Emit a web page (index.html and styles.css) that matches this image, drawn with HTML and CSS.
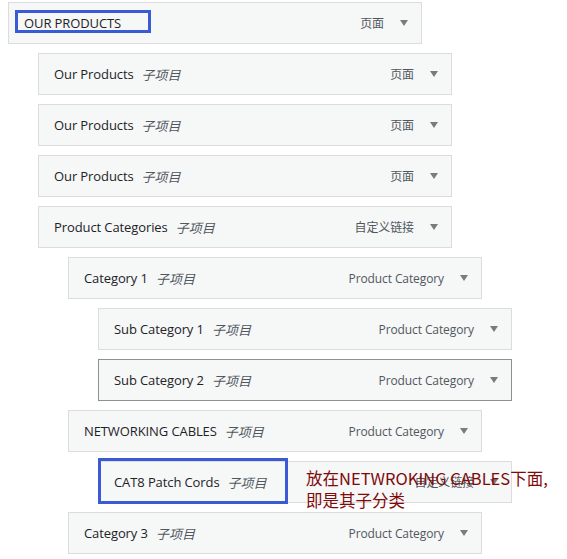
FILE: index.html
```html
<!DOCTYPE html>
<html lang="zh-CN">
<head>
    <meta charset="UTF-8">
    <title>菜单结构</title>
    <link rel="stylesheet" href="styles.css">
</head>
<body>
    <ul class="menu">
        <li class="menu-item depth-0">
            <span class="item-title">OUR PRODUCTS</span>
            <span class="item-type">页面</span>
            <span class="item-arrow"></span>
            <span class="mark mark-top"></span>
        </li>
        <li class="menu-item depth-1">
            <span class="item-title">Our Products</span>
            <span class="item-sub">子项目</span>
            <span class="item-type">页面</span>
            <span class="item-arrow"></span>
        </li>
        <li class="menu-item depth-1">
            <span class="item-title">Our Products</span>
            <span class="item-sub">子项目</span>
            <span class="item-type">页面</span>
            <span class="item-arrow"></span>
        </li>
        <li class="menu-item depth-1">
            <span class="item-title">Our Products</span>
            <span class="item-sub">子项目</span>
            <span class="item-type">页面</span>
            <span class="item-arrow"></span>
        </li>
        <li class="menu-item depth-1">
            <span class="item-title">Product Categories</span>
            <span class="item-sub">子项目</span>
            <span class="item-type">自定义链接</span>
            <span class="item-arrow"></span>
        </li>
        <li class="menu-item depth-2">
            <span class="item-title">Category 1</span>
            <span class="item-sub">子项目</span>
            <span class="item-type">Product Category</span>
            <span class="item-arrow"></span>
        </li>
        <li class="menu-item depth-3">
            <span class="item-title">Sub Category 1</span>
            <span class="item-sub">子项目</span>
            <span class="item-type">Product Category</span>
            <span class="item-arrow"></span>
        </li>
        <li class="menu-item depth-3 is-hover">
            <span class="item-title">Sub Category 2</span>
            <span class="item-sub">子项目</span>
            <span class="item-type">Product Category</span>
            <span class="item-arrow"></span>
        </li>
        <li class="menu-item depth-2">
            <span class="item-title">NETWORKING CABLES</span>
            <span class="item-sub">子项目</span>
            <span class="item-type">Product Category</span>
            <span class="item-arrow"></span>
        </li>
        <li class="menu-item depth-3">
            <span class="item-title">CAT8 Patch Cords</span>
            <span class="item-sub">子项目</span>
            <span class="item-type">自定义链接</span>
            <span class="item-arrow"></span>
            <span class="mark mark-cat8"></span>
            <span class="note">放在NETWROKING CABLES下面,<br>即是其子分类</span>
        </li>
        <li class="menu-item depth-2">
            <span class="item-title">Category 3</span>
            <span class="item-sub">子项目</span>
            <span class="item-type">Product Category</span>
            <span class="item-arrow"></span>
        </li>
    </ul>
</body>
</html>
```

FILE: styles.css
```css
:root {
    --wp-border: #dcdcde;
    --wp-bg: #f6f7f7;
    --wp-text: #1d2327;
    --wp-muted: #50575e;
    --mark-blue: #3a5bd4;
}

* {
    margin: 0;
    padding: 0;
    box-sizing: border-box;
}

body {
    margin: 2px 0 0 8px;
    background: #ffffff;
    font-family: 'Open Sans', 'Noto Sans CJK SC', sans-serif;
    font-size: 13px;
    color: var(--wp-text);
}

.menu {
    list-style: none;
}

.menu-item {
    position: relative;
    width: 414px;
    height: 42px;
    margin-bottom: 9px;
    padding: 0 13px 0 15px;
    border: 1px solid var(--wp-border);
    background: var(--wp-bg);
    display: flex;
    align-items: center;
}

.depth-1 { margin-left: 30px; }
.depth-2 { margin-left: 60px; }
.depth-3 { margin-left: 90px; }

.menu-item.is-hover {
    border-color: #8c8f94;
}

.item-title {
    font-weight: 500;
    letter-spacing: -0.1px;
}

.item-sub {
    margin-left: 8px;
    font-style: italic;
    color: var(--wp-muted);
}

.item-type {
    margin-left: auto;
    color: var(--wp-muted);
    font-size: 12px;
    letter-spacing: -0.1px;
}

.item-arrow {
    width: 8px;
    height: 6px;
    margin-left: 16px;
    border-left: 4px solid transparent;
    border-right: 4px solid transparent;
    border-top: 6px solid #787c82;
}

/* 标注框和说明文字 */
.mark {
    position: absolute;
    border: 3px solid var(--mark-blue);
}

.mark-top {
    left: 6px;
    top: 7px;
    width: 136px;
    height: 23px;
}

.mark-cat8 {
    left: -1px;
    top: -4px;
    width: 190px;
    height: 46px;
}

.note {
    position: absolute;
    left: 207px;
    top: 5px;
    font-family: 'Noto Sans CJK SC', sans-serif;
    font-size: 16.5px;
    line-height: 22px;
    color: #7f0a0a;
    white-space: nowrap;
}
```
